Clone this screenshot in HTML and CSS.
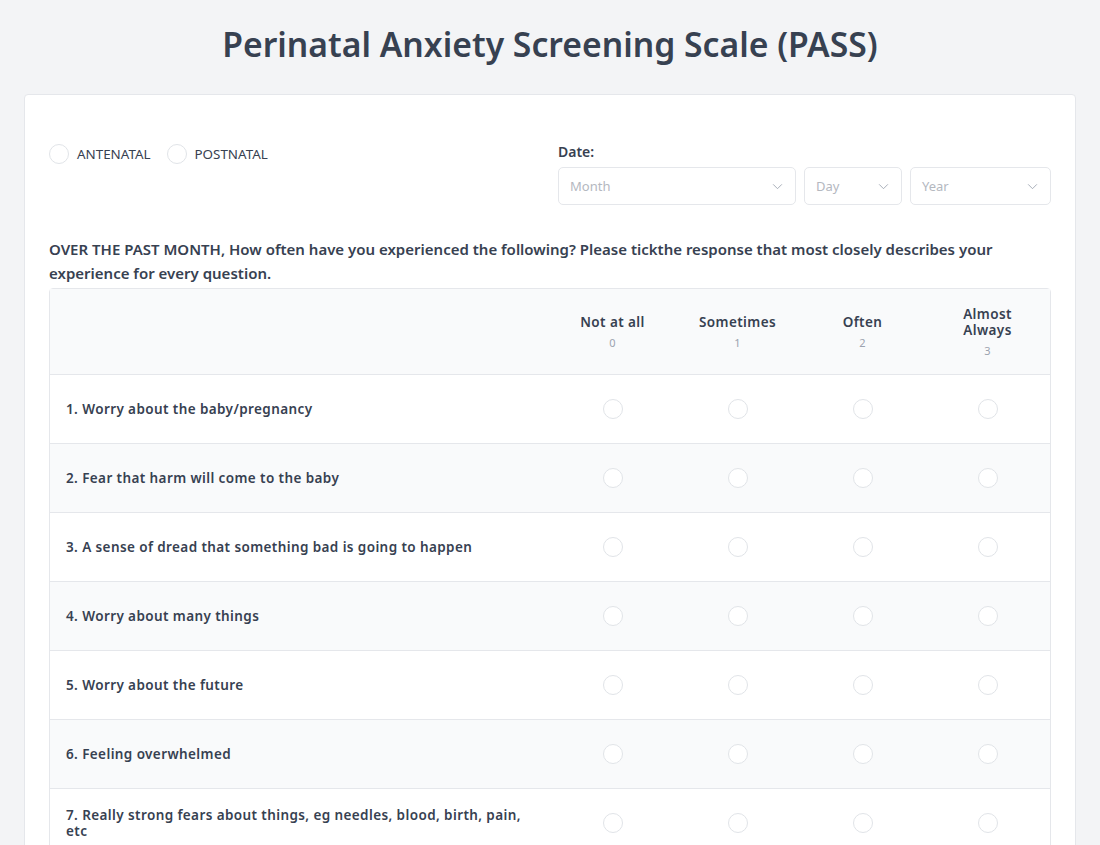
FILE: index.html
```html
<!DOCTYPE html>
<html lang="en">
<head>
<meta charset="utf-8">
<title>PASS</title>
<link rel="stylesheet" href="styles.css">
</head>
<body>
<h1 class="title">Perinatal Anxiety Screening Scale (PASS)</h1>
<div class="card">
  <div class="top">
    <div class="types">
      <label class="opt"><span class="radio"></span><span>ANTENATAL</span></label>
      <label class="opt"><span class="radio"></span><span>POSTNATAL</span></label>
    </div>
    <div class="date">
      <div class="date-label">Date:</div>
      <div class="selects">
        <div class="select month"><span>Month</span><svg viewBox="0 0 12 8" class="chev"><path d="M1 1.5l5 5 5-5" fill="none" stroke="currentColor" stroke-width="1"/></svg></div>
        <div class="select day"><span>Day</span><svg viewBox="0 0 12 8" class="chev"><path d="M1 1.5l5 5 5-5" fill="none" stroke="currentColor" stroke-width="1"/></svg></div>
        <div class="select year"><span>Year</span><svg viewBox="0 0 12 8" class="chev"><path d="M1 1.5l5 5 5-5" fill="none" stroke="currentColor" stroke-width="1"/></svg></div>
      </div>
    </div>
  </div>
  <p class="instr">OVER THE PAST MONTH, How often have you experienced the following? Please tickthe response that most closely describes your experience for every question.</p>
  <div class="table">
    <div class="row head">
      <div class="q"></div>
      <div class="c"><div class="h">Not at all</div><div class="n">0</div></div>
      <div class="c"><div class="h">Sometimes</div><div class="n">1</div></div>
      <div class="c"><div class="h">Often</div><div class="n">2</div></div>
      <div class="c"><div class="h">Almost<br>Always</div><div class="n">3</div></div>
    </div>
    <div class="row"><div class="q">1. Worry about the baby/pregnancy</div><div class="c"><span class="radio"></span></div><div class="c"><span class="radio"></span></div><div class="c"><span class="radio"></span></div><div class="c"><span class="radio"></span></div></div>
    <div class="row alt"><div class="q">2. Fear that harm will come to the baby</div><div class="c"><span class="radio"></span></div><div class="c"><span class="radio"></span></div><div class="c"><span class="radio"></span></div><div class="c"><span class="radio"></span></div></div>
    <div class="row"><div class="q">3. A sense of dread that something bad is going to happen</div><div class="c"><span class="radio"></span></div><div class="c"><span class="radio"></span></div><div class="c"><span class="radio"></span></div><div class="c"><span class="radio"></span></div></div>
    <div class="row alt"><div class="q">4. Worry about many things</div><div class="c"><span class="radio"></span></div><div class="c"><span class="radio"></span></div><div class="c"><span class="radio"></span></div><div class="c"><span class="radio"></span></div></div>
    <div class="row"><div class="q">5. Worry about the future</div><div class="c"><span class="radio"></span></div><div class="c"><span class="radio"></span></div><div class="c"><span class="radio"></span></div><div class="c"><span class="radio"></span></div></div>
    <div class="row alt"><div class="q">6. Feeling overwhelmed</div><div class="c"><span class="radio"></span></div><div class="c"><span class="radio"></span></div><div class="c"><span class="radio"></span></div><div class="c"><span class="radio"></span></div></div>
    <div class="row"><div class="q">7. Really strong fears about things, eg needles, blood, birth, pain, etc</div><div class="c"><span class="radio"></span></div><div class="c"><span class="radio"></span></div><div class="c"><span class="radio"></span></div><div class="c"><span class="radio"></span></div></div>
  </div>
</div>
</body>
</html>
```
FILE: styles.css
```css
* { box-sizing: border-box; }
html, body { margin: 0; padding: 0; }
body {
  background: #f3f4f6;
  font-family: "Noto Sans", "Open Sans", sans-serif;
  color: #374151;
  padding: 0 24px;
}
.title {
  margin: 0;
  padding: 22px 0 0;
  height: 94px;
  text-align: center;
  font-size: 33.7px;
  font-weight: 600;
  line-height: 44px;
  color: #374151;
}
.card {
  background: #fff;
  border: 1px solid #e5e7eb;
  border-radius: 4px;
  padding: 0 24px 24px;
}
.top {
  display: flex;
  justify-content: space-between;
  padding-top: 48px;
  height: 142px;
}
.types { display: flex; gap: 16px; padding-top: 1px; }
.opt { display: flex; align-items: flex-start; gap: 8px; font-size: 13.4px; color: #374151; line-height: 20px; }
.radio {
  display: inline-block;
  width: 20px; height: 20px;
  border-radius: 50%;
  border: 1px solid #e1e4e8;
  background: #fff;
  flex: none;
}
.date { width: 493px; }
.date-label { font-size: 14px; font-weight: 600; line-height: 20px; margin-top: -1px; margin-bottom: 5px; }
.selects { display: flex; gap: 8px; }
.select {
  height: 38px;
  border: 1px solid #e5e7eb;
  border-radius: 5px;
  display: flex; align-items: center; justify-content: space-between;
  padding: 0 12px 0 11px;
  font-size: 13px;
  color: #b4b8bf;
}
.month { width: 238px; }
.day { width: 98px; }
.year { width: 141px; }
.chev { width: 11px; height: 7px; color: #9ca3af; }
.instr {
  margin: 0 0 3px;
  font-size: 15px;
  font-weight: 600;
  line-height: 24px;
  color: #374151;
}
.table {
  border: 1px solid #e5e7eb;
  border-radius: 4px 4px 0 0;
}
.row {
  display: grid;
  grid-template-columns: 500px repeat(4, 125px);
  height: 69px;
  border-top: 1px solid #e5e7eb;
  align-items: center;
}
.row.head { border-top: 0; height: 85px; background: #f9fafb; }
.row.alt { background: #f9fafb; }
.q {
  padding: 0 16px;
  font-size: 13.5px;
  font-weight: 600;
  letter-spacing: 0.4px;
  line-height: 16px;
  color: #374151;
}
.c { display: flex; flex-direction: column; align-items: center; justify-content: center; text-align: center; }
.h { font-size: 13.5px; font-weight: 600; letter-spacing: 0.4px; line-height: 16px; }
.n { font-size: 11px; color: #9ca3af; line-height: 14px; margin-top: 6px; }
```
